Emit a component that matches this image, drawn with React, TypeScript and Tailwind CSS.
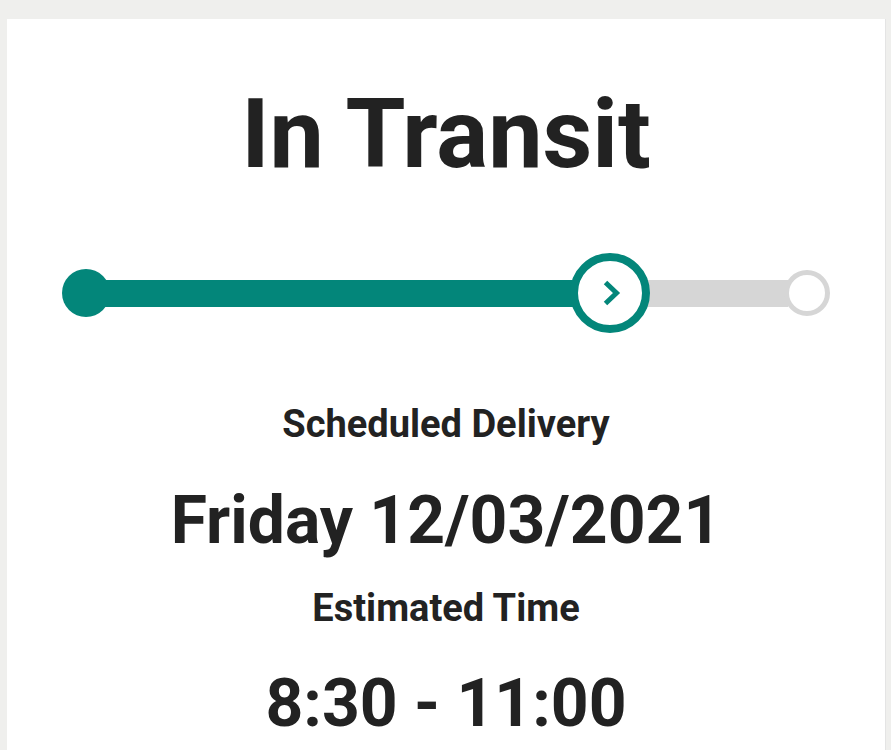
const TEAL = '#03867a';

function ProgressTrack() {
  return (
    <div className="flex items-center w-full">
      <div className="w-12 h-12 rounded-full bg-[#03867a] shrink-0" />
      <div className="flex-1 h-[27px] bg-[#03867a] -ml-2" />
      <div className="w-20 h-20 rounded-full border-[8px] border-[#03867a] bg-white shrink-0 flex items-center justify-center -mx-1 z-10">
        <svg width="32" height="32" viewBox="0 0 32 32" fill="none" className="ml-[3px]">
          <path d="M9.5 5.5 L20.5 16 L9.5 26.5" stroke={TEAL} strokeWidth="5" strokeLinecap="butt" strokeLinejoin="miter" />
        </svg>
      </div>
      <div className="w-[142px] h-[27px] bg-[#d6d6d6]" />
      <div className="w-[46px] h-[46px] rounded-full border-[5px] border-[#d6d6d6] bg-white shrink-0 -ml-1" />
    </div>
  );
}

export default function App() {
  return (
    <div className="min-h-[750px] bg-[#efefed] pt-[19px] pl-[7px] pr-[6px] font-['Roboto',sans-serif] text-[#222222]">
      <div className="bg-white min-h-[731px] shadow-[1px_0_0_#e4e4e4] flex flex-col items-center pt-[67px] px-[55px]">
        <h1 className="text-[97px] font-bold leading-none">In Transit</h1>
        <div className="w-full mt-[70px]">
          <ProgressTrack />
        </div>
        <p className="mt-[72px] text-[38px] font-bold leading-none">Scheduled Delivery</p>
        <p className="mt-[45px] text-[66px] font-bold leading-none">Friday 12/03/2021</p>
        <p className="mt-[35px] text-[38px] font-bold leading-none">Estimated Time</p>
        <p className="mt-[44px] text-[66px] font-bold leading-none">8:30 - 11:00</p>
      </div>
    </div>
  );
}
